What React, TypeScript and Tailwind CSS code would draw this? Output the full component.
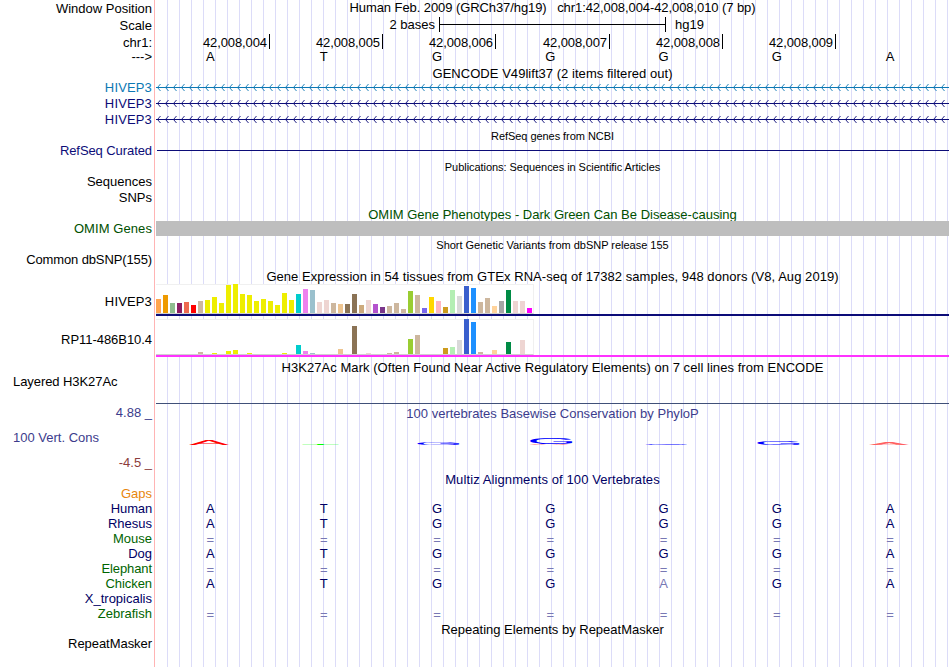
const labels = [
  { text: "Window Position", cls: "h-[17px]" },
  { text: "Scale", cls: "h-[17px]" },
  { text: "chr1:", cls: "h-[14px]" },
  { text: "--->", cls: "h-[31px]" },
  { text: "HIVEP3", cls: "h-4 tracking-[0.15px] text-[#0c78b4]" },
  { text: "HIVEP3", cls: "h-4 tracking-[0.15px] text-[#0c0c78]" },
  { text: "HIVEP3", cls: "h-[31px] tracking-[0.15px] text-[#0c0c78]" },
  { text: "RefSeq Curated", cls: "h-[31px] tracking-[-0.08px] text-[#0c0c78]" },
  { text: "Sequences", cls: "h-4" },
  { text: "SNPs", cls: "h-[31px]" },
  { text: "OMIM Genes", cls: "h-[31px] tracking-[0.08px] text-[#005000]" },
  { text: "Common dbSNP(155)", cls: "h-[42px] tracking-[-0.12px]" },
  { text: "HIVEP3", cls: "h-[38px] tracking-[0.15px]" },
  { text: "RP11-486B10.4", cls: "h-[42px] tracking-[-0.05px]" },
  { text: "Layered H3K27Ac", cls: "h-[31px] text-left pl-[13px] tracking-[-0.07px]" },
  { text: "4.88 _", cls: "h-[25px] text-[#3c3c8c]" },
  { text: "100 Vert. Cons", cls: "h-[25px] text-left pl-[13px] text-[#3c3c8c]" },
  { text: "-4.5 _", cls: "h-[31px] text-[#8c3c3c]" },
  { text: "Gaps", cls: "h-[15px] text-[#e8860c]" },
  { text: "Human", cls: "h-[15px] tracking-[-0.15px] text-[#000064]" },
  { text: "Rhesus", cls: "h-[15px] text-[#000064]" },
  { text: "Mouse", cls: "h-[15px] text-[#006400]" },
  { text: "Dog", cls: "h-[15px] text-[#000064]" },
  { text: "Elephant", cls: "h-[15px] tracking-[-0.1px] text-[#006400]" },
  { text: "Chicken", cls: "h-[15px] tracking-[-0.05px] text-[#006400]" },
  { text: "X_tropicalis", cls: "h-[15px] text-[#000064]" },
  { text: "Zebrafish", cls: "h-[30px] text-[#006400]" },
  { text: "RepeatMasker", cls: "h-[31px] tracking-[-0.05px]" },
];

const positions = [
  { text: "42,008,004", cls: "w-[114px]" },
  { text: "42,008,005", cls: "w-[113px]" },
  { text: "42,008,006", cls: "w-[113px]" },
  { text: "42,008,007", cls: "w-[114px]" },
  { text: "42,008,008", cls: "w-[113px]" },
  { text: "42,008,009", cls: "w-[113px]" },
];

// Human, Rhesus, Mouse, Dog, Elephant, Chicken, X_tropicalis, Zebrafish
const alignments = [
  "ATGGGGA",
  "ATGGGGA",
  "=======",
  "ATGGGGA",
  "=======",
  "ATGGaGA",
  "       ",
  "=======",
];

const tissueColors = [
  "#FFA54F", "#EE9A00", "#8FBC8F", "#8B1C62", "#EE6A50", "#FF0000", "#CDB79E",
  "#EEEE00", "#EEEE00", "#EEEE00", "#EEEE00", "#EEEE00", "#EEEE00", "#EEEE00",
  "#EEEE00", "#EEEE00", "#EEEE00", "#EEEE00", "#EEEE00", "#EEEE00", "#00CDCD",
  "#EE82EE", "#9AC0CD", "#EED5D2", "#EED5D2", "#CDB79E", "#EEC591", "#8B7355",
  "#8B7355", "#CDAA7D", "#EED5D2", "#B452CD", "#7A378B", "#CDB79E", "#CDB79E",
  "#CDB79E", "#9ACD32", "#CDB79E", "#7A67EE", "#FFD700", "#FFB6C1", "#CD9B1D",
  "#B4EEB4", "#D9D9D9", "#3A5FCD", "#1E90FF", "#CDB79E", "#CDB79E", "#FFD39B",
  "#A6A6A6", "#008B45", "#EED5D2", "#EED5D2", "#FF00FF",
];

const hivep3 = [
  14, 18, 10, 10, 11, 8, 12, 13, 16, 10, 28, 29, 19, 18, 12, 14, 12, 8, 20, 13,
  19, 24, 23, 11, 13, 10, 9, 9, 19, 8, 13, 9, 6, 7, 10, 4, 22, 18, 5, 16, 12, 6,
  23, 17, 27, 25, 11, 15, 7, 12, 23, 12, 12, 5,
];

const rp11 = [
  0, 0, 0, 0, 0, 0, 2, 0, 1, 0, 3, 4, 0, 1, 0, 0, 0, 0, 1, 0,
  9, 3, 1, 0, 0, 0, 5, 0, 28, 0, 1, 0, 0, 1, 2, 0, 15, 19, 0, 0, 0, 6,
  7, 14, 35, 32, 2, 0, 4, 0, 12, 0, 14, 0,
];

// Conservation logo: glyphs stretched to the score of each base
const logo = [
  { ch: "A", x: 33, y: 24, sx: 0.6, sy: 0.07, color: "#ff0000" },
  { ch: "T", x: 145, y: 24, sx: 0.64, sy: 0.014, color: "#00ff00" },
  { ch: "G", x: 258, y: 24, sx: 0.64, sy: 0.042, color: "#0000ff" },
  { ch: "A", x: 373, y: 24, sx: 0.6, sy: 0.014, color: "#ff0000" },
  { ch: "G", x: 371, y: 23, sx: 0.64, sy: 0.098, color: "#0000ff" },
  { ch: "G", x: 486, y: 24, sx: 0.64, sy: 0.014, color: "#0000ff" },
  { ch: "G", x: 598, y: 24, sx: 0.64, sy: 0.055, color: "#0000ff" },
  { ch: "A", x: 713, y: 24, sx: 0.6, sy: 0.026, color: "#ff6060" },
];

function Title({ children, className = "" }: { children: string; className?: string }) {
  return <div className={`text-center whitespace-pre ${className}`}>{children}</div>;
}

function Bases({ seq, className = "" }: { seq: string; className?: string }) {
  return (
    <div className={`grid grid-cols-7 h-[15px] ${className}`}>
      {seq.split("").map((b, i) => (
        <span
          key={i}
          className={`text-center pr-[4.5px] ${b === "=" ? "pt-px text-[#7878b4]" : b === "a" ? "text-[#7878b4]" : ""}`}
        >
          {b.toUpperCase()}
        </span>
      ))}
    </div>
  );
}

function Intron({ color, className }: { color: string; className: string }) {
  const arrows = Array.from({ length: 99 }, (_, i) => 1 + i * 8);
  return (
    <div className={className}>
      <svg width="793" height="9" className="block">
        <rect x="0" y="4" width="793" height="1" fill={color} />
        {arrows.map((x) => (
          <path key={x} d={`M${x + 3.5} 1 L${x + 0.5} 4.5 L${x + 3.5} 8`} fill="none" stroke={color} strokeWidth="0.9" />
        ))}
      </svg>
    </div>
  );
}

function Expression({ values, className }: { values: number[]; className: string }) {
  return (
    <div className={`w-[378px] flex items-end gap-[2px] bg-white border border-[#f0f0f0] border-l-0 border-b-[#d0d0d0] ${className}`}>
      {values.map((v, i) => (
        <div key={i} className="w-[5px] shrink-0" style={{ height: v, backgroundColor: tissueColors[i] }} />
      ))}
    </div>
  );
}

export default function App() {
  return (
    <div className="w-[950px] h-[667px] overflow-hidden bg-white flex text-black text-[13px] leading-[15px] font-['Liberation_Sans',Arial,sans-serif]">
      <div className="w-[154px] shrink-0 pt-px pr-[2px] text-right whitespace-pre">
        {labels.map((l, i) => (
          <div key={i} className={l.cls}>{l.text}</div>
        ))}
      </div>
      <div className="w-px mr-px shrink-0 bg-[#ffb4b4]" />
      <div className="w-[793px] shrink-0 bg-[repeating-linear-gradient(to_right,transparent_0,transparent_11px,#dcdcf8_11px,#dcdcf8_12px)]">
        <Title className="h-[17px] tracking-[-0.08px]">{"Human Feb. 2009 (GRCh37/hg19)   chr1:42,008,004-42,008,010 (7 bp)"}</Title>
        <div className="h-[17px] flex items-start">
          <span className="w-[279px] text-right">2 bases</span>
          <div className="ml-1 w-[227px] h-[15px] border-x border-black pt-[7px]">
            <div className="h-px bg-black" />
          </div>
          <span className="ml-[9px]">hg19</span>
        </div>
        <div className="h-[15px] flex tracking-[-0.1px]">
          {positions.map((p) => (
            <div key={p.text} className={`border-r border-black text-right pr-[2px] pt-px ${p.cls}`}>{p.text}</div>
          ))}
        </div>
        <Bases seq="ATGGGGA" className="mb-[2px]" />

        <Title className="h-[17px] tracking-[0.04px]">GENCODE V49lift37 (2 items filtered out)</Title>
        <Intron color="#0c78b4" className="h-4" />
        <Intron color="#0c0c78" className="h-4" />
        <Intron color="#0c0c78" className="h-[15px]" />

        <Title className="h-5 text-[11px] leading-3 tracking-[-0.05px]">RefSeq genes from NCBI</Title>
        <div className="h-px ml-px bg-[#0c0c78]" />
        <Title className="mt-[10px] h-[46px] text-[11px] leading-3 tracking-[-0.05px]">Publications: Sequences in Scientific Articles</Title>

        <Title className="h-[14px] overflow-hidden text-[#005000]">OMIM Gene Phenotypes - Dark Green Can Be Disease-causing</Title>
        <div className="h-[15px] bg-[#bebebe]" />
        <Title className="mt-[3px] h-[30px] text-[11px] leading-3 tracking-[-0.02px]">Short Genetic Variants from dbSNP release 155</Title>

        <Title className="h-[15px] tracking-[0.055px]">Gene Expression in 54 tissues from GTEx RNA-seq of 17382 samples, 948 donors (V8, Aug 2019)</Title>
        <Expression values={hivep3} className="h-[30px]" />
        <div className="h-[2px] mb-[3px] bg-[#0c0c78]" />
        <Expression values={rp11} className="h-9" />
        <div className="h-[2px] mb-[3px] bg-[#ff33ff]" />

        <Title className="h-[43px] tracking-[0.05px]">H3K27Ac Mark (Often Found Near Active Regulatory Elements) on 7 cell lines from ENCODE</Title>
        <div className="h-px mb-[2px] bg-[#405078]" />

        <Title className="h-[15px] tracking-[0.01px] text-[#3c3c8c]">100 vertebrates Basewise Conservation by PhyloP</Title>
        <svg width="793" height="51" className="block">
          {logo.map((g, i) => (
            <text key={i} transform={`translate(${g.x} ${g.y}) scale(${g.sx} ${g.sy})`} fontSize="100" fill={g.color}>
              {g.ch}
            </text>
          ))}
        </svg>

        <Title className="h-[29px] tracking-[0.1px] text-[#000064]">Multiz Alignments of 100 Vertebrates</Title>
        {alignments.map((seq, i) => (
          <Bases key={i} seq={seq} className="text-[#000064]" />
        ))}
        <Title className="mt-px">Repeating Elements by RepeatMasker</Title>
      </div>
    </div>
  );
}
